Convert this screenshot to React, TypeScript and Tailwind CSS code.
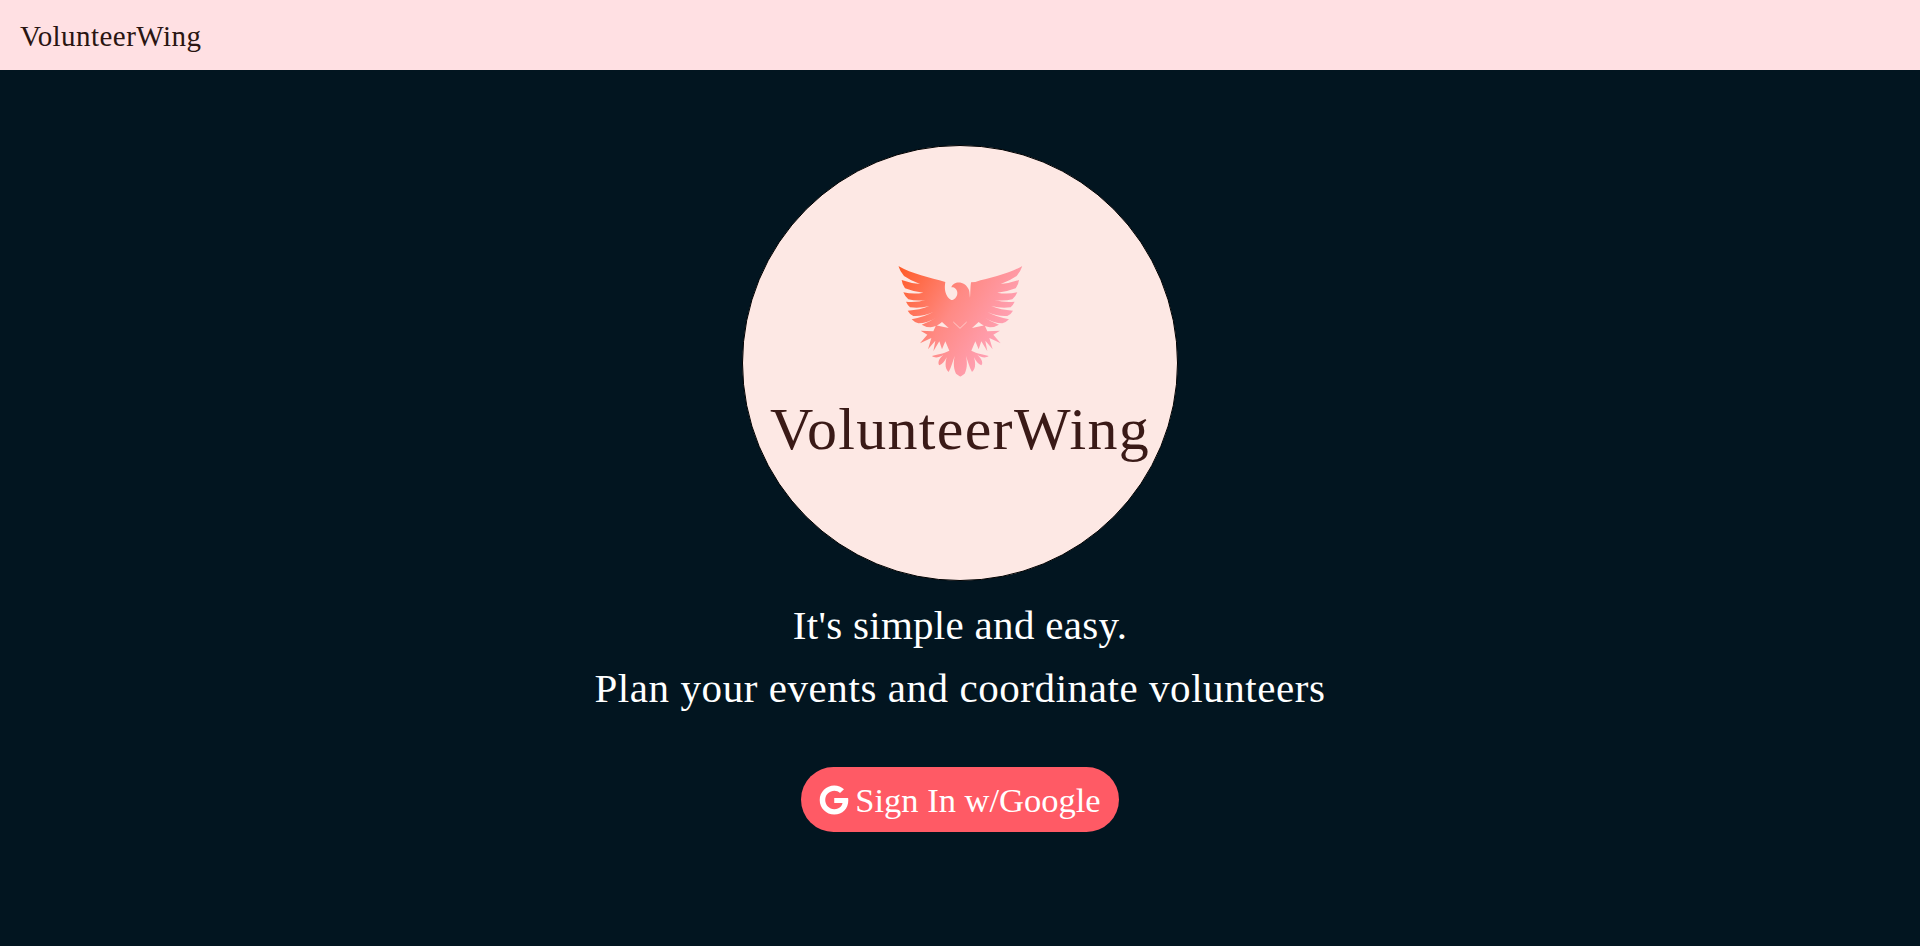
import { FaGoogle } from "react-icons/fa";

const half =
  "M85 48 C125 72 180 82 226 96 C222 118 226 140 244 150 L271 150 L271 380 L258 371 C250 355 250 335 254 318 C248 335 244 352 236 366 C226 358 224 342 230 322 C224 334 218 342 208 346 C202 340 206 326 220 314 C208 322 196 326 186 318 C200 312 220 312 238 302 L226 274 L216 298 L208 274 L190 304 L196 272 L174 298 L184 264 L150 280 L172 254 L152 242 L190 244 L198 226 L236 234 L216 216 Q200 230 182 232 Q168 232 155 224 Q180 216 200 202 Q172 220 145 220 Q132 216 125 208 Q160 202 190 186 Q160 200 130 198 Q118 192 113 182 Q150 180 178 168 Q150 176 120 172 Q112 164 108 155 Q140 158 168 150 Q140 154 115 148 Q104 138 100 127 Q132 134 160 128 Q132 126 105 115 Q96 102 95 90 Q122 100 150 102 Q122 92 102 78 Q90 64 85 48 Z";

function Eagle() {
  return (
    <svg viewBox="0 0 540 420" className="block w-[180px] h-[140px]">
      <defs>
        <linearGradient id="eg" gradientUnits="userSpaceOnUse" x1="90" y1="60" x2="420" y2="260">
          <stop offset="0" stopColor="#ff5c2a" />
          <stop offset="0.5" stopColor="#ff8a84" />
          <stop offset="1" stopColor="#ffa4bb" />
        </linearGradient>
        <clipPath id="ec">
          <path d={half} />
          <path d={half} transform="matrix(-1 0 0 1 542 0)" />
          <path d="M303 97 L318 96 L322 155 L298 155 C302 140 300 115 303 97 Z" />
          <path d="M244 112 C250 92 285 90 297 120 C300 130 298 142 302 150 L240 152 C250 150 262 144 262 128 C262 116 250 110 244 112 Z" />
        </clipPath>
      </defs>
      <rect width="540" height="420" fill="url(#eg)" clipPath="url(#ec)" />
      <path d="M250 216 L270 235 L290 216" fill="none" stroke="#fde8e4" strokeWidth="2" />
    </svg>
  );
}

export default function App() {
  return (
    <div className="min-h-[946px] bg-[#021520] font-['Liberation_Serif',serif]">
      <nav className="flex h-[70px] items-center bg-[#ffe0e3] px-5">
        <span className="pt-[3px] text-[29px] leading-none text-[#2a1512] tracking-[0.45px]">VolunteerWing</span>
      </nav>
      <main className="flex flex-col items-center pt-[75px]">
        <div className="box-border flex h-[436px] w-[436px] flex-col items-center rounded-full border border-black bg-[#fde8e4] pt-[104px]">
          <Eagle />
          <div className="mt-[4px] text-[60px] leading-[70px] text-[#3a1a17] tracking-[1.3px] whitespace-nowrap">
            VolunteerWing
          </div>
        </div>
        <p className="mt-[20px] text-[41px] leading-[48px] text-white tracking-[0.3px]">It's simple and easy.</p>
        <p className="mt-[15px] text-[41px] leading-[48px] text-white tracking-[0.57px]">Plan your events and coordinate volunteers</p>
        <button className="mt-[55px] flex h-[65px] w-[318px] items-center justify-center gap-[6px] rounded-full bg-[#ff5a65] text-[34.5px] text-white">
          <FaGoogle className="h-[30px] w-[30px]" />
          <span className="pt-[2px]">Sign In w/Google</span>
        </button>
      </main>
    </div>
  );
}
